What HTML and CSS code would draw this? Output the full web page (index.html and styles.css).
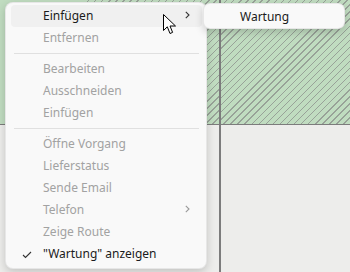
FILE: index.html
```html
<!DOCTYPE html>
<html>
<head>
<meta charset="utf-8">
<link rel="stylesheet" href="styles.css">
</head>
<body>
<div class="stage">
  <div class="canvas">
    <div class="cell green-plain"></div>
    <div class="cell green-hatch"></div>
    <div class="cell green-hatch right"></div>
    <div class="cell grey"></div>
    <div class="cell grey"></div>
    <div class="cell grey right"></div>
  </div>

  <div class="menu">
    <div class="item hover"><span class="label">Einfügen</span><svg class="arrow" width="5" height="8" viewBox="0 0 5 8"><polyline points="0.8,0.8 4,4 0.8,7.2" fill="none" stroke="#333" stroke-width="1.1"/></svg></div>
    <div class="item disabled"><span class="label">Entfernen</span></div>
    <div class="sep"></div>
    <div class="item disabled"><span class="label">Bearbeiten</span></div>
    <div class="item disabled"><span class="label">Ausschneiden</span></div>
    <div class="item disabled"><span class="label">Einfügen</span></div>
    <div class="sep"></div>
    <div class="item disabled"><span class="label">Öffne Vorgang</span></div>
    <div class="item disabled"><span class="label">Lieferstatus</span></div>
    <div class="item disabled"><span class="label">Sende Email</span></div>
    <div class="item disabled"><span class="label">Telefon</span><svg class="arrow" width="5" height="8" viewBox="0 0 5 8"><polyline points="0.8,0.8 4,4 0.8,7.2" fill="none" stroke="#9a9a9a" stroke-width="1.1"/></svg></div>
    <div class="item disabled"><span class="label">Zeige Route</span></div>
    <div class="item">
      <svg class="check" width="10" height="8" viewBox="0 0 10 8"><polyline points="1,4 3.5,6.5 9,1" fill="none" stroke="#333" stroke-width="1.1"/></svg>
      <span class="label">"Wartung" anzeigen</span>
    </div>
  </div>

  <div class="submenu">
    <div class="item"><span class="label">Wartung</span></div>
  </div>

  <svg class="cursor" width="14" height="21" viewBox="0 0 14 21">
    <path d="M0.5 0.5 L0.5 16.5 L4.3 12.8 L7 19.5 L9.6 18.4 L7 12 L12.5 12 Z" fill="#fff" stroke="#000" stroke-width="1" stroke-linejoin="round"/>
  </svg>
</div>
</body>
</html>
```

FILE: styles.css
```css
* { box-sizing: border-box; }
html, body { margin: 0; padding: 0; }
body {
  font-family: "Noto Sans", "Segoe UI", sans-serif;
  font-size: 12px;
}
.stage {
  position: relative;
  width: 350px;
  height: 272px;
  overflow: hidden;
  background: #ededeb;
}
.canvas {
  display: grid;
  grid-template-columns: 85px 134px 131px;
  grid-template-rows: 125px 147px;
  width: 350px;
  height: 272px;
}
.cell.right { border-left: 2px solid #7c7c7c; }
.green-plain { background: #c0dcc0; }
.green-hatch {
  background-color: #c0dcc0;
  background-image: repeating-linear-gradient(-45deg, transparent 0 4px, #98a298 4px 5px);
}
.green-plain, .green-hatch { border-bottom: 1px solid #7c7c7c; }
.grey { background: #ededeb; }

.menu {
  position: absolute;
  left: 5px;
  top: 2px;
  width: 202px;
  padding: 2px 4px 3px 5px;
  background: #f9f9f9;
  border: 1px solid rgba(0,0,0,0.07);
  border-radius: 8px;
  box-shadow: 0 3px 9px rgba(0,0,0,0.18);
  display: flex;
  flex-direction: column;
}
.item {
  position: relative;
  height: 22px;
  display: flex;
  align-items: center;
  padding-left: 32px;
  padding-right: 12px;
  color: #1b1b1b;
  border-radius: 4px;
}
.label {
  flex: 1;
  white-space: nowrap;
  position: relative;
  top: -1px;
}
.item.hover { background: #f0f0f0; }
.item.disabled { color: #a2a2a2; }
.arrow { margin-top: -2px; }
.sep {
  height: 9px;
  display: flex;
  align-items: center;
  padding: 0 3px 0 3px;
}
.sep::before {
  content: "";
  flex: 1;
  height: 1px;
  background: #e0e0e0;
}
.check {
  position: absolute;
  left: 11px;
  top: 8px;
}
.submenu {
  position: absolute;
  left: 203px;
  top: 3px;
  width: 142px;
  height: 26px;
  padding: 2px 4px;
  background: #f9f9f9;
  border: 1px solid rgba(0,0,0,0.07);
  border-radius: 7px;
  box-shadow: 0 3px 9px rgba(0,0,0,0.18);
}
.submenu .item { padding-left: 32px; }
.cursor {
  position: absolute;
  left: 163px;
  top: 14px;
}
```
